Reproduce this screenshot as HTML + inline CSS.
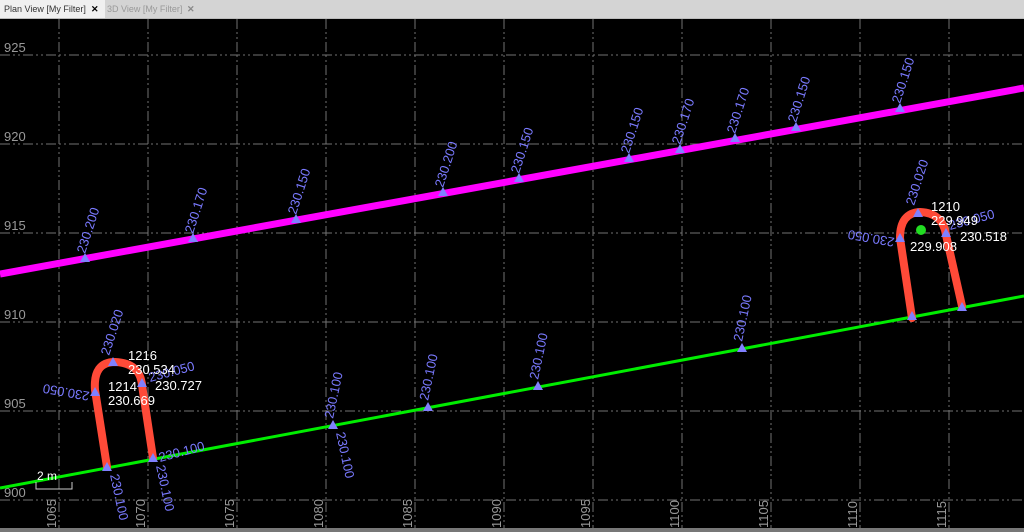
<!DOCTYPE html>
<html><head><style>
body{margin:0;width:1024px;height:532px;overflow:hidden;background:#000;font-family:"Liberation Sans",sans-serif}
#tabs{position:absolute;left:0;top:0;width:1024px;height:18px;background:#d4d4d4;border-bottom:1px solid #bbb}
.t{position:absolute;top:4px;font-size:9px;color:#333}
svg{position:absolute;left:0;top:19px}
</style></head><body>
<div id="tabs">
<div style="position:absolute;left:0;top:0;width:105px;height:18px;background:#f0f0f0"></div>
<span class="t" style="left:4px">Plan View [My Filter]</span>
<span class="t" style="left:91px;font-weight:bold;color:#000">✕</span>
<span class="t" style="left:107px;color:#999">3D View [My Filter]</span>
<span class="t" style="left:187px;font-weight:bold;color:#888">✕</span>
</div>
<svg width="1024" height="513" viewBox="0 19 1024 513">
<rect x="0" y="19" width="1024" height="513" fill="#000"/>
<g stroke="#999" stroke-width="1" stroke-dasharray="10,3,2,3,2,3" opacity=".75">
<line x1="59" y1="19" x2="59" y2="532"/><line x1="148" y1="19" x2="148" y2="532"/><line x1="237" y1="19" x2="237" y2="532"/><line x1="326" y1="19" x2="326" y2="532"/><line x1="415" y1="19" x2="415" y2="532"/><line x1="504" y1="19" x2="504" y2="532"/><line x1="593" y1="19" x2="593" y2="532"/><line x1="682" y1="19" x2="682" y2="532"/><line x1="771" y1="19" x2="771" y2="532"/><line x1="860" y1="19" x2="860" y2="532"/><line x1="949" y1="19" x2="949" y2="532"/>
<line x1="0" y1="55" x2="1024" y2="55"/><line x1="0" y1="144" x2="1024" y2="144"/><line x1="0" y1="233" x2="1024" y2="233"/><line x1="0" y1="322" x2="1024" y2="322"/><line x1="0" y1="411" x2="1024" y2="411"/><line x1="0" y1="500" x2="1024" y2="500"/>
</g>
<g fill="#999" font-size="13">
<text x="4" y="52">925</text><text x="4" y="141">920</text><text x="4" y="230">915</text><text x="4" y="319">910</text><text x="4" y="408">905</text><text x="4" y="497">900</text>
<g transform="rotate(-90)">
<text x="-528" y="56">1065</text><text x="-528" y="145">1070</text><text x="-528" y="234">1075</text><text x="-528" y="323">1080</text><text x="-528" y="412">1085</text><text x="-528" y="501">1090</text><text x="-528" y="590">1095</text><text x="-528" y="679">1100</text><text x="-528" y="768">1105</text><text x="-528" y="857">1110</text><text x="-528" y="946">1115</text>
</g></g>
<line x1="0" y1="274" x2="1024" y2="88" stroke="#ff00ff" stroke-width="7"/>
<line x1="0" y1="488" x2="1024" y2="296" stroke="#00ee00" stroke-width="3"/>
<g fill="none" stroke="#ff4a38" stroke-width="8" stroke-linecap="round">
<path d="M107,467 L95,390 Q93,362 115,362 Q140,363 142,385 L153,458"/>
<path d="M912,318 L900,238 Q900,213 920,212 Q943,213 946,235 L962,306"/>
</g>
<circle cx="921" cy="230" r="5" fill="#22dd22"/>
<g fill="#8080ff">
<path d="M80,262 l10,0 -5,-9z"/><path d="M188,242 l10,0 -5,-9z"/><path d="M291,223 l10,0 -5,-9z"/><path d="M438,196 l10,0 -5,-9z"/><path d="M514,182 l10,0 -5,-9z"/><path d="M624,162 l10,0 -5,-9z"/><path d="M675,153 l10,0 -5,-9z"/><path d="M730,142 l10,0 -5,-9z"/><path d="M791,131 l10,0 -5,-9z"/><path d="M895,112 l10,0 -5,-9z"/>
<path d="M102,471 l10,0 -5,-9z"/><path d="M148,462 l10,0 -5,-9z"/><path d="M328,429 l10,0 -5,-9z"/><path d="M423,411 l10,0 -5,-9z"/><path d="M533,390 l10,0 -5,-9z"/><path d="M737,352 l10,0 -5,-9z"/><path d="M907,320 l10,0 -5,-9z"/><path d="M957,311 l10,0 -5,-9z"/>
<path d="M108,366 l10,0 -5,-9z"/><path d="M90,396 l10,0 -5,-9z"/><path d="M137,387 l10,0 -5,-9z"/>
<path d="M913,217 l10,0 -5,-9z"/><path d="M895,242 l10,0 -5,-9z"/><path d="M941,237 l10,0 -5,-9z"/>
</g>
<g fill="#7a7aff" font-size="13">
<text transform="translate(85,254) rotate(-72)">230.200</text>
<text transform="translate(193,234) rotate(-72)">230.170</text>
<text transform="translate(296,215) rotate(-72)">230.150</text>
<text transform="translate(443,188) rotate(-72)">230.200</text>
<text transform="translate(519,174) rotate(-72)">230.150</text>
<text transform="translate(629,154) rotate(-72)">230.150</text>
<text transform="translate(680,145) rotate(-72)">230.170</text>
<text transform="translate(735,134) rotate(-72)">230.170</text>
<text transform="translate(796,123) rotate(-72)">230.150</text>
<text transform="translate(900,104) rotate(-72)">230.150</text>
<text transform="translate(109,356) rotate(-72)">230.020</text>
<text transform="translate(914,206) rotate(-72)">230.020</text>
<text transform="translate(333,419) rotate(-78)">230.100</text>
<text transform="translate(428,401) rotate(-78)">230.100</text>
<text transform="translate(538,380) rotate(-78)">230.100</text>
<text transform="translate(742,342) rotate(-78)">230.100</text>
<text transform="translate(110,475) rotate(78)">230.100</text>
<text transform="translate(156,466) rotate(78)">230.100</text>
<text transform="translate(336,433) rotate(78)">230.100</text>
<text transform="translate(90,392) rotate(190)">230.050</text>
<text transform="translate(895,238) rotate(190)">230.050</text>
<text transform="translate(150,382) rotate(-15)">230.050</text>
<text transform="translate(950,230) rotate(-15)">230.050</text>
<text transform="translate(160,462) rotate(-15)">230.100</text>
</g>
<g fill="#fff" font-size="13">
<text x="128" y="360">1216</text><text x="128" y="374">230.534</text>
<text x="108" y="391">1214</text><text x="108" y="405">230.669</text>
<text x="155" y="390">230.727</text>
<text x="931" y="211">1210</text><text x="931" y="225">229.949</text>
<text x="910" y="251">229.908</text><text x="960" y="241">230.518</text>
</g>
<path d="M36,482 v7 h36 v-7" fill="none" stroke="#ccc"/>
<text x="37" y="480" fill="#fff" font-size="12">2 m</text>
<rect x="0" y="528" width="1024" height="4" fill="#777"/>
</svg>
</body></html>
